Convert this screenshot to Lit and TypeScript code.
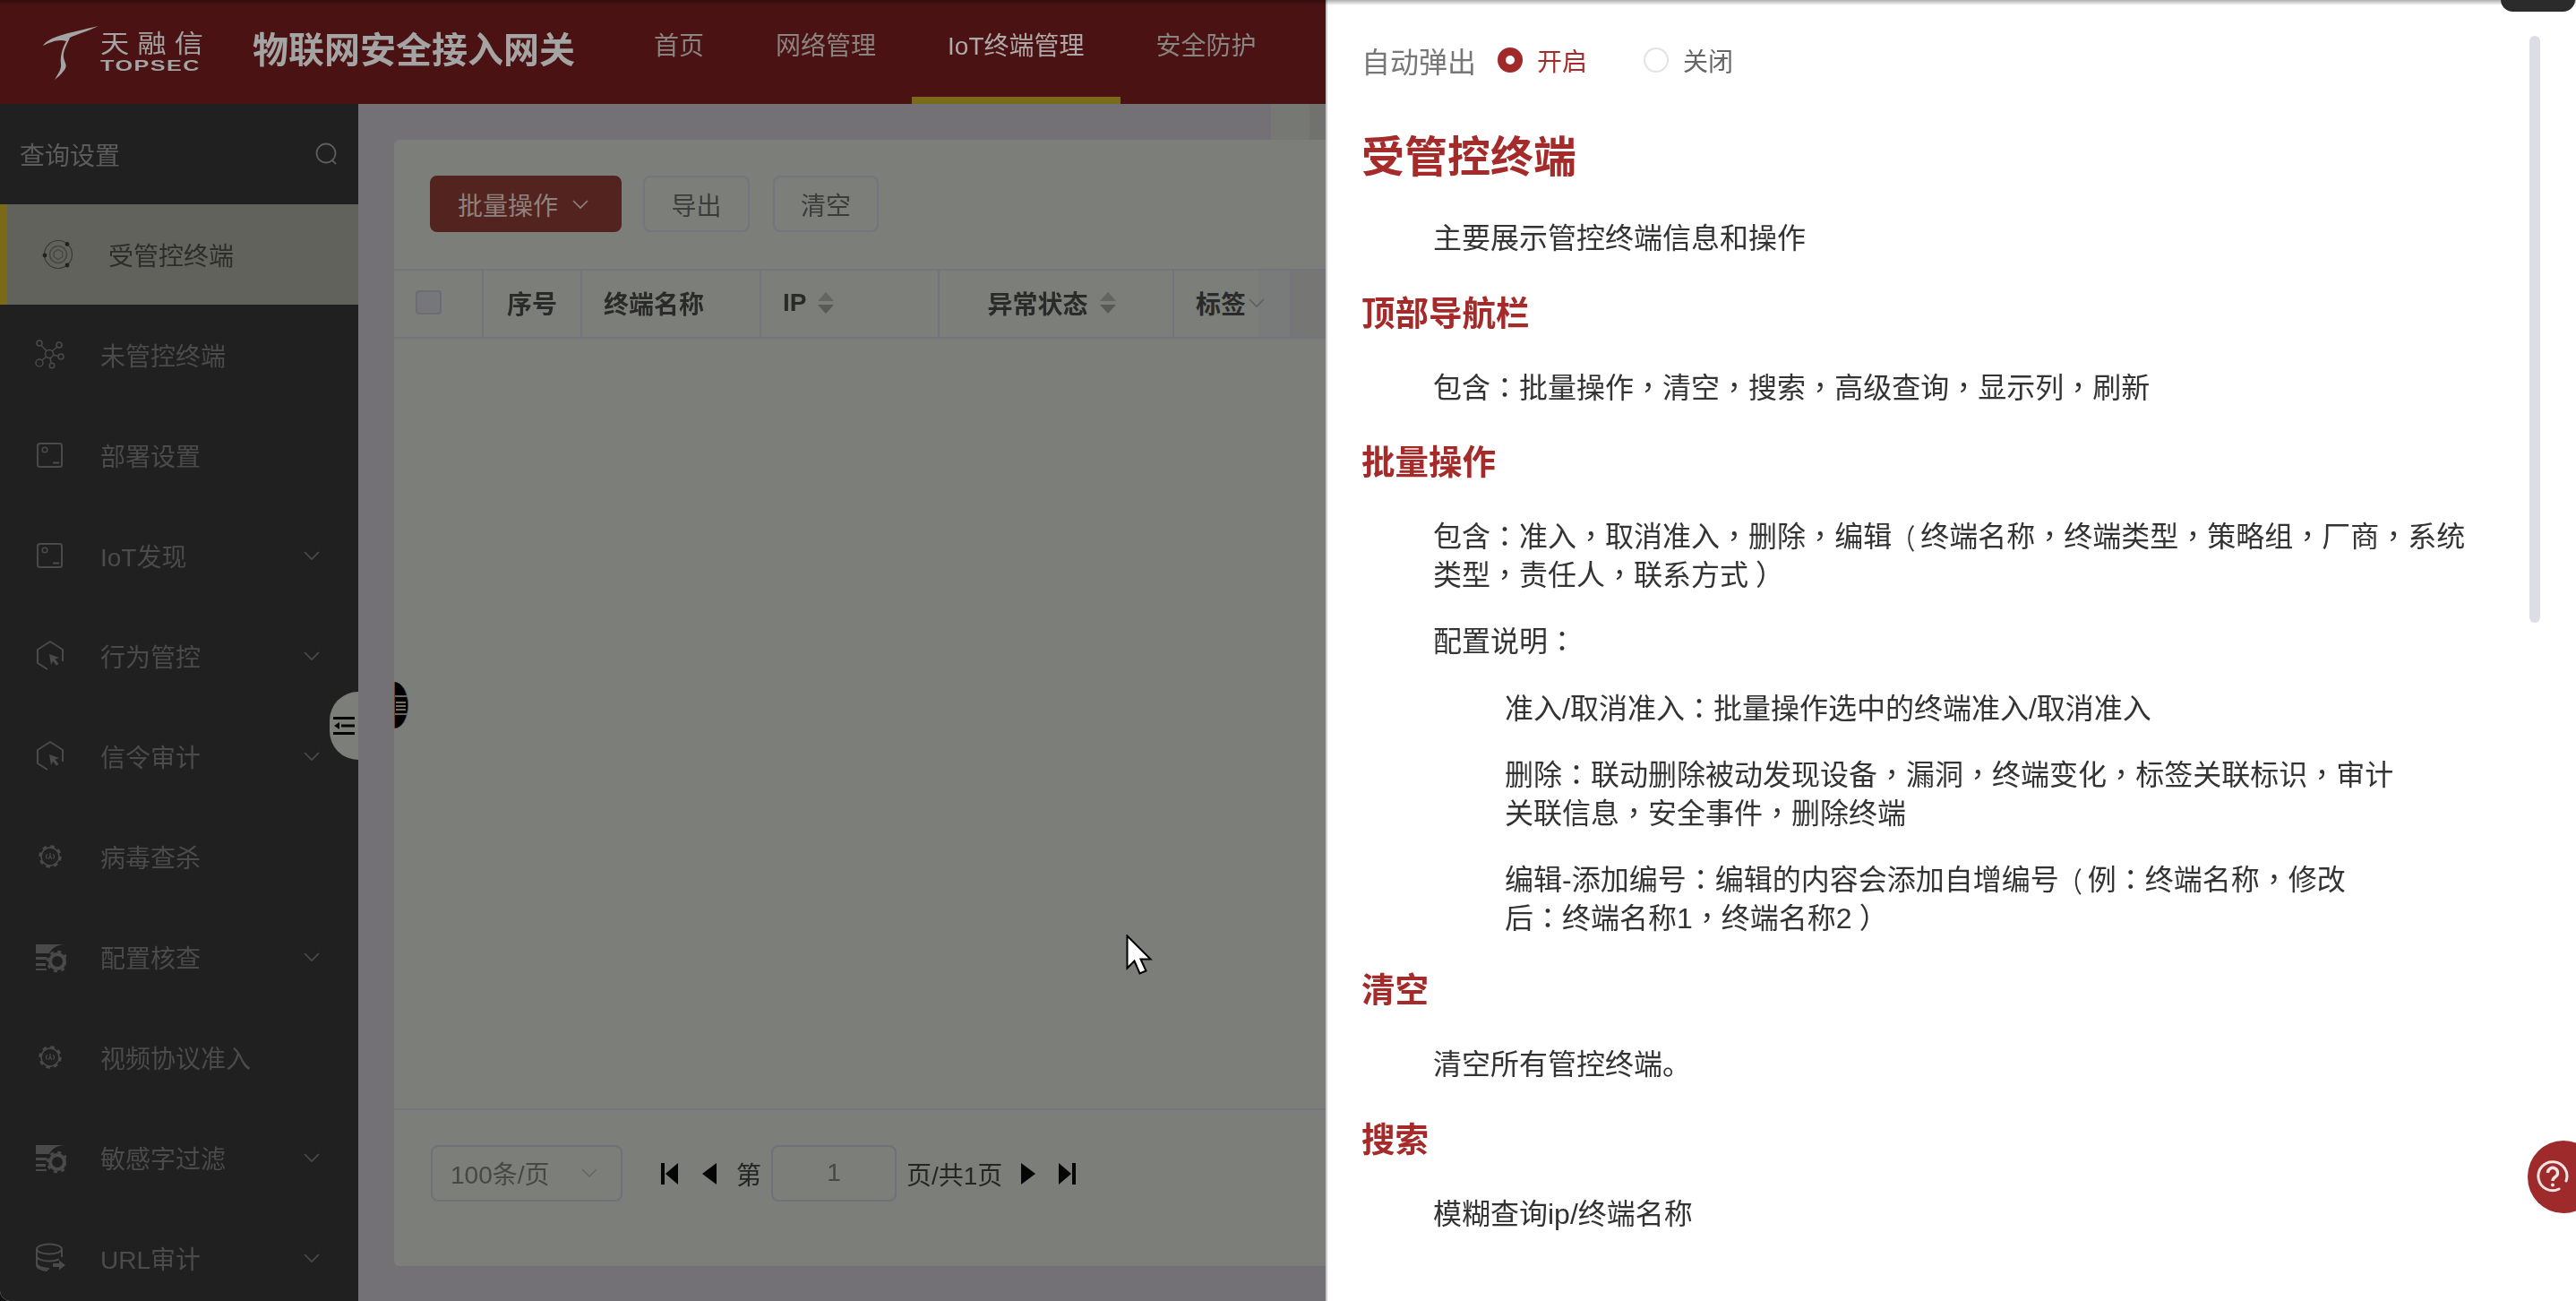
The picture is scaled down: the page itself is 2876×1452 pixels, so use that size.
import { LitElement, html, css, svg } from "lit";
import { customElement } from "lit/decorators.js";

const chevron = (c = "#5c5c5c") => html`<svg class="chev" width="20" height="12" viewBox="0 0 20 12" fill="none" stroke=${c} stroke-width="1.6"><path d="M2 2l8 8 8-8"/></svg>`;
const sort = html`<svg class="sort" width="20" height="24" viewBox="0 0 20 24"><path d="M10 0l9 10H1z" fill="#636563"/><path d="M10 24L1 14h18z" fill="#585a58"/></svg>`;

const gear = svg`<circle cx="17" cy="17" r="10" fill="none" stroke="#4a4a4a" stroke-width="1.500"/><circle cx="17" cy="17" r="11.500" fill="none" stroke="#4a4a4a" stroke-width="2.500" stroke-dasharray="4.500 4.530"/><path d="M14 14.500c-2 1-2 4-.5 5M20 14.500c2 1 2 4 .5 5M17 13v4l-2 2.500M17 17l2 2.500" fill="none" stroke="#4a4a4a" stroke-width="1.300"/>`;

const I: Record<string, unknown> = {
  orbit: svg`<circle cx="17" cy="17" r="15.500" fill="none" stroke="#363636" stroke-width="1.100"/><circle cx="17" cy="17" r="9.500" fill="none" stroke="#46463f" stroke-width="1.600"/><path d="M17 11.500l4.800 2.800v5.400L17 22.500l-4.800-2.800v-5.400z" fill="none" stroke="#46463f" stroke-width="1.300"/><circle cx="27" cy="5.500" r="2.400" fill="#222"/><circle cx="2" cy="18" r="2.400" fill="#222"/><circle cx="27" cy="29" r="2.400" fill="#222"/>`,
  net: svg`<g fill="none" stroke="#4a4a4a" stroke-width="1.500"><circle cx="16" cy="16" r="4.500"/><circle cx="5" cy="4" r="3"/><circle cx="27" cy="6" r="3"/><circle cx="5" cy="26" r="4"/><circle cx="29" cy="19" r="3"/><circle cx="19" cy="29" r="2.800"/><path d="M7 6.500l6 6M25 8l-6 5M8 23l5-4M20 17l6 1.500M17 20.500l1 5.500"/></g>`,
  dash: svg`<rect x="3" y="4" width="27" height="26" rx="2.500" fill="none" stroke="#4a4a4a" stroke-width="2"/><circle cx="11" cy="11" r="2.800" fill="none" stroke="#4a4a4a" stroke-width="1.500"/><path d="M20 25.500h7" stroke="#4a4a4a" stroke-width="2"/>`,
  hex: svg`<path d="M14 32L3 25V10L17 1l14 9v13" fill="none" stroke="#4a4a4a" stroke-width="2" stroke-linejoin="round"/><path d="M16 15l11 4-4.500 1.800 4 5-2.500 2-3.800-5L18 27z" fill="#4a4a4a"/>`,
  gear,
  cfg: svg`<path d="M1 3h31c-8 1-13 4-16 10H1z" fill="#4a4a4a"/><path d="M1 17h12v3H1zM1 24h11v3H1zM1 30h12v2H1z" fill="#4a4a4a"/><circle cx="25" cy="22" r="8" fill="none" stroke="#4a4a4a" stroke-width="4"/><circle cx="25" cy="22" r="11" fill="none" stroke="#4a4a4a" stroke-width="2.500" stroke-dasharray="4 4.640"/>`,
  db: svg`<g fill="none" stroke="#4a4a4a" stroke-width="2"><ellipse cx="16" cy="7" rx="14" ry="5.500"/><path d="M2 7v8c0 3 6 5.500 14 5.500 4 0 8-.7 11-2M30 7v9M2 15v8c0 3 6 6 14 6M2 23v2c0 3 6 6 12 6"/></g><path d="M20 23h7v-3.500l7 5.500-7 5.500V27h-7z" fill="#4a4a4a"/>`,
};
const icon = (n: string) => html`<svg class="ic" width="36" height="36" viewBox="-1 -1 36 36">${I[n]}</svg>`;

/* Full-width punctuation sits centred in its cell in the reference. */
const txt = (s: string) =>
  s.split(/([，：（）\n])/).map((part) => {
    if (part === "\n") return html`<br>`;
    if (part === "（") return html`<span class="pn po">${part}</span>`;
    if (part === "）") return html`<span class="pn pc">${part}</span>`;
    if (part === "，" || part === "：") return html`<span class="pn">${part}</span>`;
    return part;
  });

const menu: [string, string, boolean][] = [
  ["net", "未管控终端", false], ["dash", "部署设置", false], ["dash", "IoT发现", true],
  ["hex", "行为管控", true], ["hex", "信令审计", true], ["gear", "病毒查杀", false],
  ["cfg", "配置核查", true], ["gear", "视频协议准入", false], ["cfg", "敏感字过滤", true], ["db", "URL审计", true],
];

@customElement("app-root")
export class AppRoot extends LitElement {
  static styles = css`
    :host { display: block; width: 2876px; height: 1452px; overflow: hidden; background: #121212;
      font-family: "Liberation Sans", "Noto Sans CJK SC", sans-serif; }
    * { box-sizing: border-box; }
    .app { position: relative; display: flex; width: 2876px; height: 1452px; overflow: hidden; filter: blur(.55px); border-bottom-left-radius: 12px; background: #fff; }
    .left { width: 1480px; flex: none; display: flex; flex-direction: column; height: 100%; overflow: hidden; position: relative; }
    header { height: 116px; flex: none; background: #4a1212; display: flex; align-items: stretch; padding-left: 48px; }
    .logo { width: 190px; display: flex; align-items: center; flex: none; }
    .logo svg { flex: none; margin-top: 2px; }
    .logo-txt { margin-left: 1px; color: #a4a4a4; display: flex; flex-direction: column; width: 116px; gap: 2px; }
    .logo-cn { font-size: 28px; line-height: 30px; letter-spacing: 8px; white-space: nowrap; transform: scaleX(1.15); transform-origin: left; }
    .logo-en { font-size: 17px; line-height: 14px; font-weight: 700; letter-spacing: 1px; transform: scaleX(1.48); transform-origin: left; white-space: nowrap; }
    .title { margin-left: 44px; width: 360px; flex: none; font-size: 40px; font-weight: 700; line-height: 112px; color: #a4a4a4; white-space: nowrap; }
    nav { display: flex; margin-left: 48px; }
    nav a { padding: 0 40px; font-size: 28px; line-height: 104px; color: #8a8480; white-space: nowrap; border-bottom: 8px solid transparent; height: 116px; }
    nav a.on { color: #aea8a8; border-bottom-color: #7a6a1a; }
    .body { flex: 1; display: flex; min-height: 0; background: #737176; }
    aside { width: 400px; flex: none; background: #202020; overflow: hidden; }
    .q { height: 112px; display: flex; align-items: center; justify-content: space-between; padding: 0 21px 0 22px; color: #5c5c5c; font-size: 28px; }
    .row { height: 112px; display: flex; align-items: center; padding-left: 38px; color: #4b4b4b; font-size: 28px; white-space: nowrap; position: relative; }
    .row.act { background: #62625c; border-left: 8px solid #7a6a18; padding-left: 39px; color: #2c2c2c; }
    .row .ic { flex: none; margin-right: 38px; }
    .row .chev { position: absolute; left: 338px; top: 50px; }
    main { flex: 1; padding: 40px 0 39px 40px; min-width: 0; display: flex; }
    .card { flex: 1; background: #7c7e7a; border-radius: 6px 0 0 6px; display: flex; flex-direction: column; position: relative; }
    .tools { height: 144px; flex: none; display: flex; align-items: flex-start; padding: 40px 0 0 40px; gap: 24px; }
    .btn { height: 63px; border: 2px solid #74737e; border-radius: 8px; font-size: 28px; color: #3c3c3c; display: flex; align-items: center; justify-content: center; width: 119px; white-space: nowrap; }
    .btn.red { width: 214px; background: #53241f; border-color: #53241f; color: #8f817d; gap: 15px; padding-right: 5px; }
    .btn + .btn + .btn { width: 118px; margin-left: 2px; }
    .thead { height: 78px; flex: none; display: grid; grid-template-columns: 100px 110px 200px 199px 262px 131px 1fr; border-top: 2px solid #74747c; border-bottom: 2px solid #74747c; }
    .th { display: flex; align-items: center; padding: 0 0 3px 24px; border-right: 2px solid #74747c; font-size: 28px; font-weight: 700; color: #2a2a2a; white-space: nowrap; gap: 12px; }
    .th.c { justify-content: center; padding-left: 0; }
    .th.st { padding-right: 9px; }
    .th:nth-child(6) { gap: 2px; background: linear-gradient(90deg, #7c7e7a 73%, #797a7a 73%); }
    .th:last-child { border-right: 0; background: #767674; }
    .cb { width: 29px; height: 27px; background: #77767b; border: 2px solid #6c6c74; border-radius: 4px; }
    .grow { flex: 1; }
    .pager { height: 176px; flex: none; border-top: 2px solid #74747c; display: flex; align-items: flex-start; padding: 39px 0 0 41px; color: #252525; font-size: 28px; white-space: nowrap; }
    .sel, .inp { height: 63px; border: 2px solid #707078; border-radius: 8px; display: flex; align-items: center; color: #474747; padding-bottom: 2px; }
    .sel { width: 214px; padding-left: 20px; justify-content: space-between; padding-right: 25px; }
    .inp { width: 140px; justify-content: center; margin: 0 11px; }
    .p { display: flex; align-items: center; height: 63px; }
    .p svg { display: block; }
    .panel { flex: 1; position: relative; background: #fff; border-left: 2px solid #cfcbd0; padding-left: 38px; color: #333; font-size: 32px; min-width: 0; overflow: hidden; }
    .auto { height: 134px; display: flex; align-items: center; color: #777; white-space: nowrap; }
    .auto span.lab { font-size: 32px; width: 128px; }
    .radio { width: 28px; height: 28px; border-radius: 50%; flex: none; margin-left: 24px; background: #fff; border: 2px solid #e2e2ea; }
    .radio.on { background: #a02a2a; border: 9px solid #a02a2a; position: relative; }
    .radio.on::after { content: ""; position: absolute; inset: 0; background: #fff; border-radius: 50%; }
    .opt { font-size: 28px; margin-left: 16px; color: #666; }
    .opt.on { color: #a52a2a; margin-right: 39px; }
    .h1, .h2 { color: #a52a2a; font-weight: 700; white-space: nowrap; }
    .h1 { font-size: 48px; line-height: 64px; margin: 10px 0 37px; }
    .h2 { font-size: 37.5px; line-height: 50px; margin: 37px 0 37px; }
    .h2.tight { margin-top: 34px; }
    .t { margin: 0 0 32px 80px; line-height: 42.500px; white-space: nowrap; }
    .t2 { margin-left: 160px; }
    .pn { font-family: "Noto Sans CJK TC", sans-serif; line-height: 0; }
    .po, .pc { display: inline-block; }
    .po { font-size: 26px; margin-right: 6px; transform: scaleY(1.2); }
    .pc { transform: translateX(8px); }
    .bar { position: absolute; left: 1342px; top: 40px; width: 12px; height: 655px; background: #dddde6; border-radius: 6px; }
    .blob { position: absolute; left: 2792px; top: -14px; width: 83px; height: 27px; background: #2b2b2b; border-radius: 14px; }
    .shade { position: absolute; left: 0; top: 0; right: 0; height: 6px; background: linear-gradient(rgba(0,0,0,.32), rgba(0,0,0,0)); }
    .help { position: absolute; left: 2822px; top: 1273px; width: 80px; height: 81px; border-radius: 41px; background: #9e2a2b; padding: 21px 0 0 9px; }
    .help svg { display: block; }
    .h-a { position: absolute; left: 368px; top: 772px; width: 32px; height: 76px; background: #7c7e7a; border-radius: 32px 0 0 32px; display: flex; align-items: center; padding-left: 4px; }
    .h-b { position: absolute; left: 440px; top: 761px; width: 16px; height: 52px; background: #000; border-radius: 0 16px 16px 0 / 0 26px 26px 0; border-right: 1px solid #243e66; border-left: 1px solid #6b4424; display: flex; align-items: center; }
    .cursor { position: absolute; left: 1257px; top: 1043px; }
    .strip { position: absolute; left: 1419px; top: 116px; width: 61px; height: 40px; background: linear-gradient(90deg, #767874 70%, #71726f 70%); }
  `;

  render() {
    return html`
      <div class="app">
        <div class="left">
          <header>
            <div class="logo">
              <svg width="63" height="60" viewBox="0 0 63 60"><path d="M0 22C6 12 28 8 62 0 50 6 38 9 30 13c-2 6-8 14-7 22 1 7 5 8 1 14-3 4-7 8-11 11 4-7 8-12 7-18-1-9 2-18 6-25C18 14 8 18 0 22z" fill="#a4a4a4"/></svg>
              <div class="logo-txt"><div class="logo-cn">天融信</div><div class="logo-en">TOPSEC</div></div>
            </div>
            <div class="title">物联网安全接入网关</div>
            <nav><a>首页</a><a>网络管理</a><a class="on">IoT终端管理</a><a>安全防护</a></nav>
          </header>
          <div class="body">
            <aside>
              <div class="q"><span>查询设置</span><svg width="28" height="28" viewBox="0 0 28 28" fill="none" stroke="#5c5c5c" stroke-width="1.800"><circle cx="13" cy="13" r="10.500"/><path d="M20 21l4 4"/></svg></div>
              <div class="row act">${icon("orbit")}<span>受管控终端</span></div>
              ${menu.map(([i, t, c]) => html`<div class="row">${icon(i)}<span>${t}</span>${c ? chevron("#4c4c4c") : ""}</div>`)}
            </aside>
            <main>
              <div class="card">
                <div class="tools">
                  <div class="btn red"><span>批量操作</span>${chevron("#8f817d")}</div>
                  <div class="btn">导出</div>
                  <div class="btn">清空</div>
                </div>
                <div class="thead">
                  <div class="th"><div class="cb"></div></div>
                  <div class="th c">序号</div>
                  <div class="th">终端名称</div>
                  <div class="th">IP ${sort}</div>
                  <div class="th c st">异常状态 ${sort}</div>
                  <div class="th">标签${chevron("#5e5e62")}</div>
                  <div class="th"></div>
                </div>
                <div class="grow"></div>
                <div class="pager">
                  <div class="sel"><span>100条/页</span>${chevron("#666")}</div>
                  <div class="p" style="margin-left:43px"><svg width="19" height="24" viewBox="0 0 19 24"><path d="M0 0h4v24H0zM19 0v24L5 12z" fill="#050505"/></svg></div>
                  <div class="p" style="margin-left:27px"><svg width="16" height="24" viewBox="0 0 16 24"><path d="M16 0v24L0 12z" fill="#050505"/></svg></div>
                  <div class="p" style="margin-left:22px">第</div>
                  <div class="inp">1</div>
                  <div class="p">页/共1页</div>
                  <div class="p" style="margin-left:21px"><svg width="16" height="24" viewBox="0 0 16 24"><path d="M0 0v24l16-12z" fill="#050505"/></svg></div>
                  <div class="p" style="margin-left:26px"><svg width="19" height="24" viewBox="0 0 19 24"><path d="M0 0v24l14-12zM15 0h4v24h-4z" fill="#050505"/></svg></div>
                </div>
              </div>
            </main>
          </div>
          <div class="strip"></div>
          <div class="h-a"><svg width="24" height="20" viewBox="0 0 24 20"><path d="M0 0h24v3H0zM0 17h24v3H0zM9 8.500h15v3H9zM1 10l6-4v8z" fill="#050505"/></svg></div>
          <div class="h-b"><svg width="14" height="22" viewBox="0 0 14 22"><path d="M0 0h14v2H0zM0 20h14v2H0z" fill="#666"/><path d="M1 7h11v2H1zM1 11h11v2H1zM1 15h11v2H1z" fill="#7d7060"/></svg></div>
        </div>
        <div class="panel">
          <div class="auto"><span class="lab">自动弹出</span><span class="radio on"></span><span class="opt on">开启</span><span class="radio"></span><span class="opt">关闭</span></div>
          <div class="h1">受管控终端</div>
          <div class="t">主要展示管控终端信息和操作</div>
          <div class="h2">顶部导航栏</div>
          <div class="t">${txt("包含：批量操作，清空，搜索，高级查询，显示列，刷新")}</div>
          <div class="h2">批量操作</div>
          <div class="t">${txt("包含：准入，取消准入，删除，编辑（终端名称，终端类型，策略组，厂商，系统\n类型，责任人，联系方式）")}</div>
          <div class="t">${txt("配置说明：")}</div>
          <div class="t t2">${txt("准入/取消准入：批量操作选中的终端准入/取消准入")}</div>
          <div class="t t2">${txt("删除：联动删除被动发现设备，漏洞，终端变化，标签关联标识，审计\n关联信息，安全事件，删除终端")}</div>
          <div class="t t2">${txt("编辑-添加编号：编辑的内容会添加自增编号（例：终端名称，修改\n后：终端名称1，终端名称2）")}</div>
          <div class="h2 tight">清空</div>
          <div class="t">清空所有管控终端。</div>
          <div class="h2">搜索</div>
          <div class="t">模糊查询ip/终端名称</div>
          <div class="bar"></div>
        </div>
        <div class="shade"></div>
        <div class="blob"></div>
        <div class="help"><svg width="38" height="38" viewBox="0 0 38 38" fill="none" stroke="#f3e4e4" stroke-width="3"><path d="M26 33A16 16 0 1 1 34 24" stroke-linecap="round"/><path d="M13.500 15a5.500 5.500 0 1 1 8.500 4.500c-2 1.300-3 2.300-3 4.500" stroke-width="3.400"/><circle cx="19" cy="28.500" r="2" fill="#f3e4e4" stroke="none"/></svg></div>
      </div>
      <svg class="cursor" width="30" height="46" viewBox="0 0 30 46"><path d="M1.500 1.500v36l8-8 6 14 7-3-6-13h11z" fill="#fff" stroke="#000" stroke-width="2"/></svg>
    `;
  }
}
